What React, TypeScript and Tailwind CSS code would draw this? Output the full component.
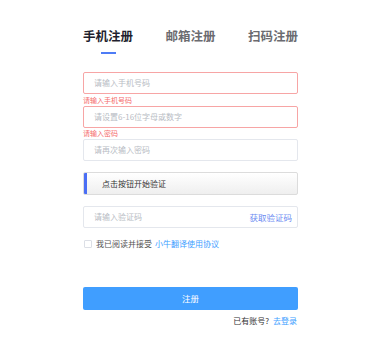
import React from "react";

const font = { fontFamily: '"Noto Sans CJK SC", "Noto Sans", sans-serif' };

function Field({ placeholder, error }: { placeholder: string; error?: boolean }) {
  return (
    <div
      className={`h-[22px] w-full rounded-[2px] border flex items-center pl-[10px] text-[8px] text-[#b8bcc4] ${
        error ? "border-[#f7a5a5]" : "border-[#e4e7ed]"
      }`}
    >
      {placeholder}
    </div>
  );
}

export default function App() {
  return (
    <div className="w-[383px] h-[355px] bg-white pt-[29px] pl-[83px]" style={font}>
      <div className="w-[215px] flex flex-col">
        <div className="flex justify-between text-[12.5px] leading-[14px] font-bold">
          <span className="text-[#1f1f2e]">手机注册</span>
          <span className="text-[#6b6b70]">邮箱注册</span>
          <span className="text-[#6b6b70]">扫码注册</span>
        </div>
        <div className="mt-[9px] ml-[18px] w-[15px] h-[2px] bg-[#4e7cf6]" />
        <div className="mt-[18px]">
          <Field placeholder="请输入手机号码" error />
        </div>
        <div className="h-[12px] text-[7px] leading-[12px] text-[#f56c6c]">请输入手机号码</div>
        <Field placeholder="请设置6-16位字母或数字" error />
        <div className="h-[11px] text-[7px] leading-[11px] text-[#f56c6c]">请输入密码</div>
        <Field placeholder="请再次输入密码" />
        <div className="mt-[11px] h-[23px] w-full rounded-[2px] border border-[#dcdcdc] bg-gradient-to-b from-white to-[#efefef] flex items-center overflow-hidden">
          <div className="w-[3px] h-full bg-[#4a6ef5]" />
          <span className="ml-[15px] text-[8px] text-[#333]">点击按钮开始验证</span>
        </div>
        <div className="mt-[11px] h-[22px] w-full rounded-[2px] border border-[#e4e7ed] flex items-center justify-between pl-[10px] pr-[5px] text-[8px]">
          <span className="text-[#b8bcc4]">请输入验证码</span>
          <span className="text-[8.5px] text-[#6d8cf2]">获取验证码</span>
        </div>
        <div className="mt-[10px] h-[12px] flex items-center">
          <div className="ml-[1px] w-[8px] h-[8px] rounded-[1px] border border-[#dcdfe6] bg-white" />
          <span className="ml-[4px] text-[8px] text-[#555]">我已阅读并接受</span>
          <span className="ml-[3px] text-[8px] text-[#409eff]">小牛翻译使用协议</span>
        </div>
        <div className="mt-[37px] h-[23px] w-full rounded-[2px] bg-[#409eff] flex items-center justify-center text-[8.5px] text-white">
          注册
        </div>
        <div className="mt-[5px] flex justify-end text-[8px] leading-[12px] pr-[1px]">
          <span className="text-[#333]">已有账号?</span>
          <span className="ml-[4px] text-[#409eff]">去登录</span>
        </div>
      </div>
    </div>
  );
}
